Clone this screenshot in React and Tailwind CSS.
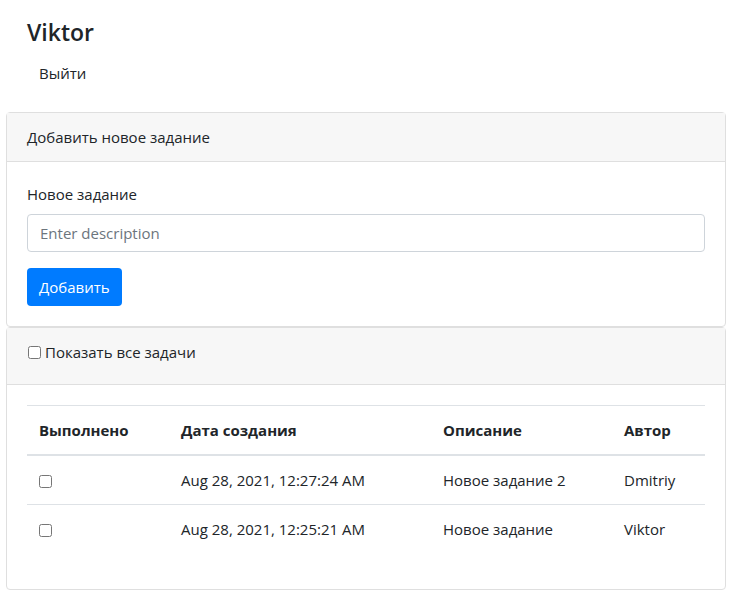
import React from "react";

const tasks = [
  { date: "Aug 28, 2021, 12:27:24 AM", text: "Новое задание 2", author: "Dmitriy" },
  { date: "Aug 28, 2021, 12:25:21 AM", text: "Новое задание", author: "Viktor" },
];

const App = () => {
  return (
    <div
      className="min-h-screen bg-white text-[#212529] text-[15px] leading-[24px]"
      style={{ fontFamily: "'Open Sans', 'Noto Sans', sans-serif" }}
    >
      <div className="px-[27px] pt-[18px]">
        <h4 className="text-[23px] leading-[29px] font-semibold mb-[7px]">Viktor</h4>
        <button className="h-[38px] px-[12px] text-[#212529]">Выйти</button>
      </div>

      {/* add task */}
      <div className="ml-[6px] mr-[5px] mt-[20px] border border-[#dfdfdf] rounded-[4px]">
        <div className="bg-[#f7f7f7] border-b border-[#dfdfdf] px-[20px] py-[12px]">
          Добавить новое задание
        </div>
        <div className="p-[20px]">
          <label className="block mb-[8px]">Новое задание</label>
          <input
            className="block w-full h-[38px] border border-[#ced4da] rounded-[4px] px-[12px] placeholder:text-[#6c757d] outline-none"
            placeholder="Enter description"
          />
          <button className="mt-[16px] h-[38px] px-[12px] rounded-[4px] bg-[#007bff] text-white">
            Добавить
          </button>
        </div>
      </div>

      {/* list */}
      <div className="ml-[6px] mr-[5px] border border-[#dfdfdf] rounded-[4px]">
        <div className="bg-[#f7f7f7] border-b border-[#dfdfdf] px-[20px] pt-[12px] pb-[20px]">
          <label className="flex items-center">
            <input type="checkbox" className="w-[13px] h-[13px] ml-[1px] mr-[4px]" />
            Показать все задачи
          </label>
        </div>
        <div className="p-[20px]">
          <table className="w-full mb-[16px] border-collapse text-left">
            <thead>
              <tr className="border-t border-[#dee2e6] border-b-2">
                <th className="p-[12px] font-bold w-[142px]">Выполнено</th>
                <th className="p-[12px] font-bold w-[262px]">Дата создания</th>
                <th className="p-[12px] font-bold w-[181px]">Описание</th>
                <th className="p-[12px] font-bold">Автор</th>
              </tr>
            </thead>
            <tbody>
              {tasks.map((t, i) => (
                <tr key={i} className="border-t border-[#dee2e6]">
                  <td className="p-[12px]">
                    <input type="checkbox" className="w-[13px] h-[13px] align-middle" />
                  </td>
                  <td className="p-[12px]">{t.date}</td>
                  <td className="p-[12px]">{t.text}</td>
                  <td className="p-[12px]">{t.author}</td>
                </tr>
              ))}
            </tbody>
          </table>
        </div>
      </div>
    </div>
  );
};

export default App;
